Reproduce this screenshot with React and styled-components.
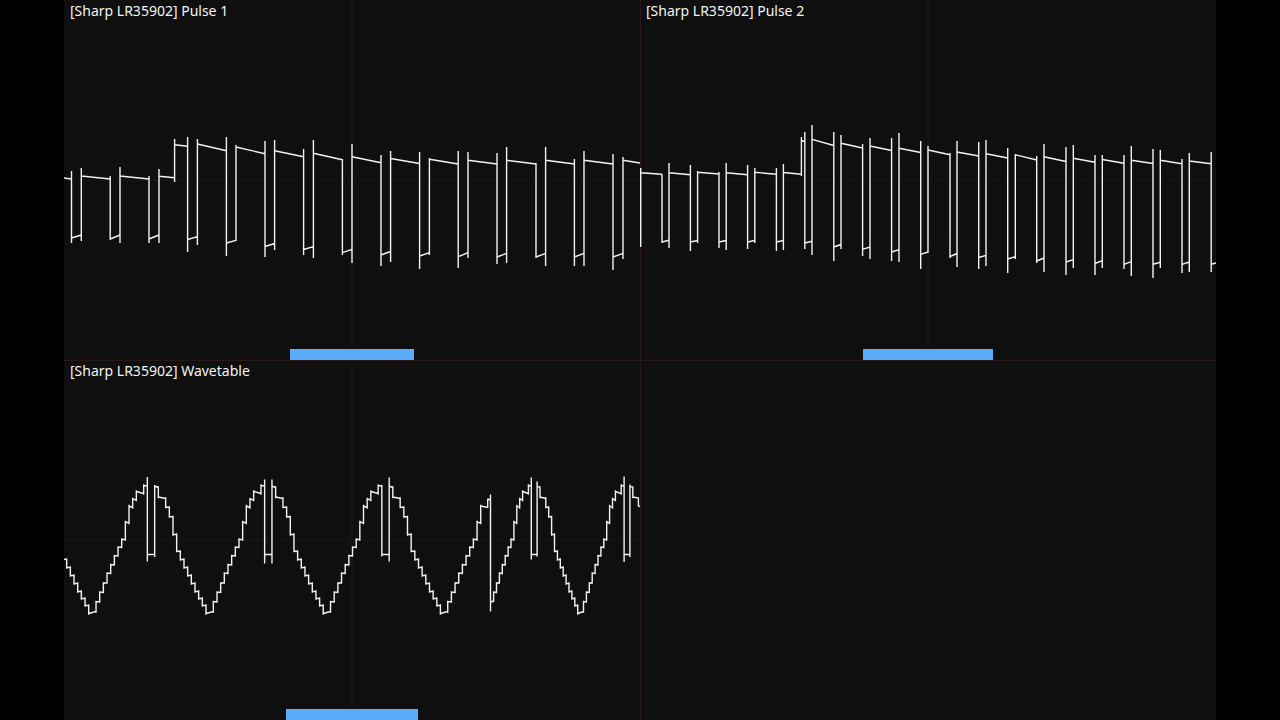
import styled, { createGlobalStyle } from "styled-components";

const GlobalStyle = createGlobalStyle`
  body {
    margin: 0;
    background: #000;
  }
`;

const Stage = styled.main`
  box-sizing: border-box;
  min-height: 100vh;
  padding: 0 5%;
  display: grid;
  grid-template-columns: 1fr 1fr;
  grid-template-rows: 1fr 1fr;
  background: #000;
`;

// every layer of a panel shares the one grid cell
const Panel = styled.section`
  display: grid;
  grid-template: minmax(0, 1fr) / minmax(0, 1fr);
  background: #0f0f0f;
  box-shadow: inset ${(props) => (props.$right ? "1px" : "0")} ${(props) =>
    props.$bottom ? "1px" : "0"} 0 #29171a;
`;

const Label = styled.h2`
  grid-area: 1 / 1;
  align-self: start;
  margin: 0;
  padding: 1px 6px;
  color: #f4f4f4;
  font-family: "Noto Sans", "Open Sans", sans-serif;
  font-size: 14px;
  font-weight: 400;
  line-height: 20px;
`;

const Scope = styled.svg`
  grid-area: 1 / 1;
  display: block;
  width: 100%;
  height: 100%;
`;

const Axis = styled.path`
  fill: none;
  stroke: ${(props) => (props.$faint ? "#161616" : "#1d1d1d")};
  stroke-width: 1;
`;

const Trace = styled.path`
  fill: none;
  stroke: #f2f2f2;
  stroke-width: 1.4;
  stroke-linejoin: bevel;
`;

const Meter = styled.div`
  grid-area: 1 / 1;
  align-self: end;
  justify-self: center;
  width: ${(props) => props.$size}%;
  height: 11px;
  background: #5aacfa;
`;

// edge: [x, spike top, spike bottom, level before, level after]
const pulse1 = [
  [7.5, 171, 243, 179, 238],
  [17.3, 168, 241, 235, 176],
  [46.2, 176, 240, 179, 239],
  [56, 167, 243, 235, 176],
  [85, 176, 243, 179, 239],
  [95, 169, 243, 235, 176.3],
  [110.6, 139, 182, 177.7, 144.7],
  [123.6, 137, 252, 146.3, 239.5],
  [133.4, 139, 245, 236.7, 144],
  [162.4, 137, 256, 150.7, 243],
  [172, 145, 241, 240.3, 147],
  [201, 141, 257, 153.7, 246.5],
  [210.6, 140, 250, 243.5, 150.7],
  [239.6, 149, 255, 156.7, 249.5],
  [249.4, 140, 258, 246.7, 153.3],
  [278.4, 159, 255, 159.7, 252.7],
  [288, 144, 263, 249.3, 156.7],
  [317, 155, 266, 162.7, 255],
  [326.6, 151, 262, 251.5, 158.5],
  [355.6, 152, 269, 163.5, 256],
  [365.4, 158, 255, 252.7, 159.3],
  [394.2, 151, 268, 164, 256.7],
  [404, 152, 258, 252.7, 160.3],
  [433, 153, 264, 164, 257],
  [442.6, 147, 263, 253.3, 160.3],
  [472, 163, 258, 164, 257],
  [481.6, 147, 266, 253.3, 160.3],
  [510.4, 159, 266, 164, 257],
  [520, 151, 266, 253.3, 160.3],
  [549, 154, 270, 164, 257],
  [559, 157, 259, 253.3, 160.3],
];

const pulse2 = [
  [0.7, 168, 247, 173, 172.7],
  [22, 174, 243, 174.3, 242],
  [29, 163, 248, 240.3, 172.7],
  [50.4, 165, 251, 174.7, 242],
  [57.6, 171, 243, 240.5, 172.3],
  [79, 172, 248, 174, 242],
  [86.2, 163, 250, 240.5, 172.7],
  [107.6, 165, 249, 174.7, 242],
  [114.8, 168, 243, 240.5, 172.3],
  [136.4, 168, 251, 174.3, 242],
  [143.4, 164, 250, 240.5, 172.5],
  [161.4, 137, 176, 174.3, 140.5],
  [164.8, 132, 249, 141.5, 243],
  [172, 125, 255, 241.3, 139.3],
  [193.8, 132, 261, 145.5, 247],
  [201, 135, 249, 244.5, 143.3],
  [222.6, 144, 256, 148, 249.3],
  [230, 138, 259, 247, 146],
  [251.6, 138, 261, 150.5, 252],
  [259, 133, 262, 249.7, 148.3],
  [280.7, 141, 269, 152.5, 254.3],
  [288, 146, 253, 252, 150],
  [310, 153, 258, 154.7, 256.5],
  [317, 141, 267, 253.5, 152],
  [338.7, 142, 269, 156, 257.5],
  [346, 140, 266, 255.3, 153.7],
  [367.7, 148, 273, 158, 259],
  [375.3, 154, 259, 256.7, 154.7],
  [396.7, 156, 263, 160, 261],
  [404, 144, 272, 258, 156.7],
  [426, 147, 275, 161.5, 262],
  [433.3, 145, 268, 259.7, 158.3],
  [455, 155, 275, 162.3, 263.5],
  [462.3, 155, 268, 260.7, 159.5],
  [484, 155, 269, 163.3, 264.3],
  [491.3, 146, 276, 261.7, 160.3],
  [513, 149, 278, 163.5, 264.3],
  [520.3, 150, 268, 262.3, 160.3],
  [542, 159, 273, 163.7, 264.3],
  [549.3, 153, 272, 262, 161],
  [571.2, 152, 272, 163.7, 264.3],
];

// one period of the 32-sample wave: [sample, level, level at the end of the hold]
const waveSteps = [
  [0, 253.5, 251.5],
  [2, 242, 241.5],
  [3, 232.5, 232],
  [4, 223.5, 222.5],
  [5, 213.5, 213],
  [6, 205, 204.5],
  [7, 196, 195.5],
  [8, 187.5, 187],
  [9, 179.5, 179.5],
  [10, 162, 163],
  [11, 146, 147.5],
  [12, 139, 140],
  [13, 131.5, 133.5],
  [15, 125.5, 126],
  [16, 194.5, 194.5],
  [18, 126, 127.5],
  [19, 137, 138.5],
  [21, 147, 147.5],
  [22, 156.5, 157],
  [23, 174.5, 174.5],
  [24, 191, 191.5],
  [25, 199.5, 199.5],
  [26, 207.5, 207.5],
  [27, 215.5, 215.5],
  [28, 223.5, 223.5],
  [29, 231.5, 231.5],
  [30, 238.5, 238.5],
  [31, 245.5, 245.5],
];

// spikes are the [top, bottom] of the two sides of the notch
const waveCycles = [
  { start: -92.6, step: 3.665, from: 25, to: 31 },
  { start: 24.7, step: 3.665, from: 0, to: 31, spikes: [[117, 201.5], [125, 197]] },
  { start: 142, step: 3.665, from: 0, to: 31, spikes: [[119.5, 203.5], [119.5, 203.5]] },
  { start: 259.2, step: 3.665, from: 0, to: 31, spikes: [[125, 196.5], [117.5, 201.5]] },
  { start: 376.4, step: 3.665, from: 0, to: 11 },
  // the pitch changes here, so the running period is cut off
  { start: 420.9, step: 2.9, from: 2, to: 31, cut: true, spikes: [[117.5, 199.5], [121.5, 196.5]] },
  { start: 513.7, step: 2.9, from: 0, to: 19, spikes: [[116.5, 202], [124.5, 197]] },
];

const edgePath = (edges, first, last) => {
  const body = edges
    .map(([x, top, bottom, before, after]) => `L${x} ${before}V${top}V${bottom}V${after}`)
    .join("");
  return `M0 ${first}${body}L576 ${last}`;
};

const buildWaveEdges = () => {
  const edges = [];
  let level = 191.5;
  waveCycles.forEach(({ start, step, from, to, cut, spikes }) => {
    if (cut) {
      edges.push([423.7, 139, 140, 147.5, 139]);
      edges.push([426.5, 134.5, 251.5, 140, 242]);
      level = 241;
    }
    waveSteps.forEach(([sample, enter, exit]) => {
      if (sample < from || sample > to || (cut && sample === 2)) return;
      let top = Math.min(level, enter) - 1.2;
      let bottom = Math.max(level, enter) + 1.2;
      if (spikes && sample === 16) [top, bottom] = spikes[0];
      if (spikes && sample === 18) [top, bottom] = spikes[1];
      edges.push([start + sample * step, top, bottom, level, enter]);
      level = exit;
    });
  });
  // last fall at the right border
  edges.push([574.4, 138, 146, 138, 146]);
  return edges;
};

const channels = [
  {
    name: "[Sharp LR35902] Pulse 1",
    path: edgePath(pulse1, 178, 163),
    meter: 21.5,
  },
  {
    name: "[Sharp LR35902] Pulse 2",
    path: edgePath(pulse2, 173, 263),
    meter: 22.7,
    right: true,
  },
  {
    name: "[Sharp LR35902] Wavetable",
    path: edgePath(buildWaveEdges().filter(([x]) => x > 1), 199.3, 146.5),
    meter: 22.9,
    bottom: true,
  },
];

const Channel = ({ channel }) => (
  <Panel $right={channel.right} $bottom={channel.bottom}>
    <Scope viewBox="0 0 576 360" preserveAspectRatio="none" aria-hidden="true">
      <Axis $faint d="M0 180.5H576" />
      <Axis d="M288 0V360" />
      <Trace d={channel.path} />
    </Scope>
    <Label>{channel.name}</Label>
    <Meter $size={channel.meter} />
  </Panel>
);

const App = () => {
  return (
    <>
      <GlobalStyle />
      <Stage>
        {channels.map((channel) => (
          <Channel key={channel.name} channel={channel} />
        ))}
        <Panel $right $bottom />
      </Stage>
    </>
  );
};

export default App;
